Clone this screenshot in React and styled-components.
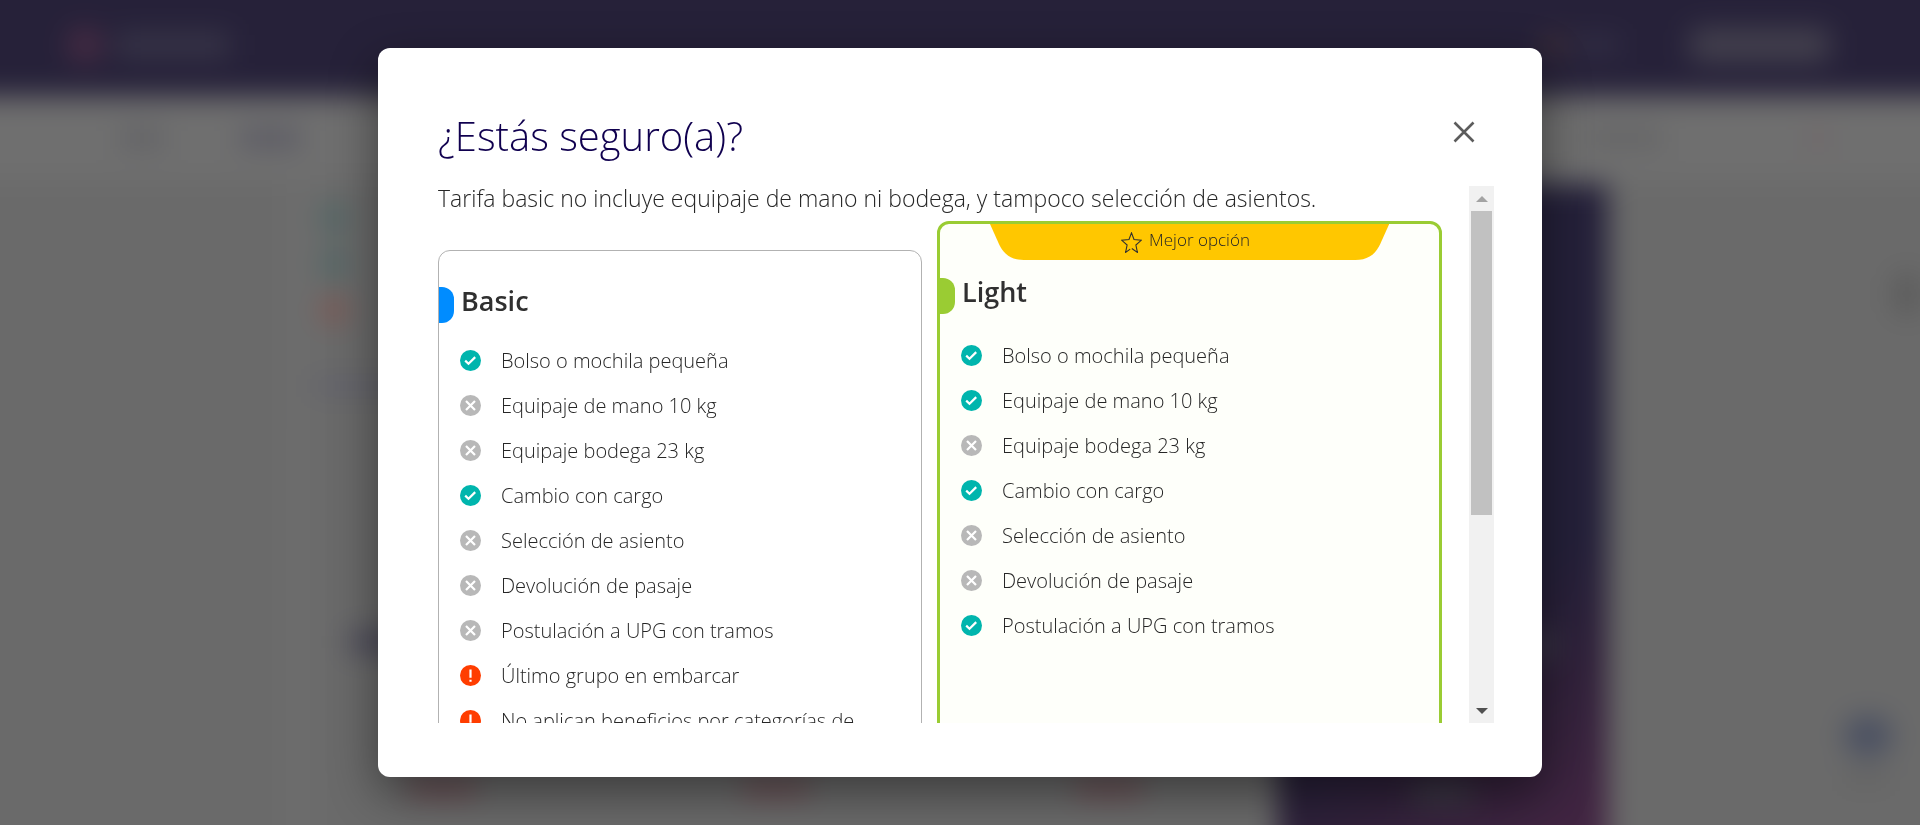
import React, { useRef } from "react";
import styled, { createGlobalStyle } from "styled-components";

const GlobalStyle = createGlobalStyle`
  *, *::before, *::after { box-sizing: border-box; }
  body {
    margin: 0;
    background: #6a6a6a;
    color: #262626;
    font-family: "Open Sans", "Noto Sans", sans-serif;
    font-weight: 300;
    overflow: hidden;
  }
`;

/* Page behind the dialog */

const Backdrop = styled.div`
  display: flex;
  flex-direction: column;
  overflow: hidden;
  filter: blur(14px);
  /* extends past the window so that the blur does not fade at its edges */
  margin: -40px;
  height: calc(100vh + 80px);
`;

const TopBar = styled.div`
  display: flex;
  align-items: center;
  flex: none;
  height: 136px;
  padding: 40px 130px 6px 108px;
  background: #262139;
`;

const SubBar = styled.div`
  display: flex;
  align-items: center;
  flex: none;
  height: 84px;
  padding: 0 120px 0 160px;
  background: #6f6f6f;
`;

const Spacer = styled.div`
  flex: 1;
`;

const Blob = styled.div`
  flex: none;
  width: ${(p) => p.$w}px;
  height: ${(p) => p.$h}px;
  margin: ${(p) => p.$m || "0"};
  border-radius: ${(p) => p.$r || 0}px;
  background: ${(p) => p.$c};
`;

const PageBody = styled.div`
  display: flex;
  flex: 1;
  padding-left: 326px;
  background: #6a6a6a;
`;

const MainColumn = styled.div`
  flex: 1;
  display: flex;
  flex-direction: column;
  padding: 16px 0 0 18px;
  background: linear-gradient(90deg, #6e6e6e, #6a6a6a 40px);
`;

const FareRow = styled.div`
  display: flex;
  justify-content: space-between;
  padding: 0 136px 0 106px;
`;

const Summary = styled.div`
  flex: none;
  width: 330px;
  display: flex;
  flex-direction: column;
  align-items: center;
  margin-top: 4px;
  background: linear-gradient(146deg, #242039 62%, #30213a 76%, #422542 94%);
`;

const SideColumn = styled.div`
  flex: none;
  width: 352px;
  display: flex;
  flex-direction: column;
  align-items: flex-end;
  padding: 92px 40px 0 0;
`;

/* Dialog */

const Overlay = styled.div`
  position: fixed;
  inset: 0;
  display: flex;
  justify-content: center;
  align-items: center;
  padding: 48px;
`;

const Dialog = styled.section`
  display: flex;
  flex-direction: column;
  width: 100%;
  max-width: 1164px;
  height: 100%;
  padding: 62px 48px 54px 60px;
  border-radius: 12px;
  background: #fff;
  box-shadow: 0 16px 48px rgba(0, 0, 0, 0.45);
`;

const DialogHeader = styled.header`
  display: flex;
  justify-content: space-between;
  align-items: flex-start;
  flex: none;
  margin-bottom: 24px;
`;

const Title = styled.h1`
  margin: 0;
  color: #10004f;
  font-size: 40px;
  line-height: 52px;
  font-weight: 300;
`;

const CloseButton = styled.button`
  display: flex;
  align-items: center;
  justify-content: center;
  width: 44px;
  height: 44px;
  margin-right: 8px;
  padding: 0;
  border: 0;
  background: none;
  color: #5c5c5c;
  cursor: pointer;
`;

const DialogBody = styled.div`
  display: flex;
  flex: 1;
  min-height: 0;
`;

const ScrollArea = styled.div`
  flex: 1;
  overflow-y: auto;
  scrollbar-width: none;
  padding-right: 27px;
`;

const Description = styled.p`
  margin: 0 0 11px;
  font-size: 23px;
  line-height: 24px;
`;

const Fares = styled.div`
  display: grid;
  grid-template-columns: 484fr 505fr;
  gap: 15px;
  min-height: 825px;
`;

const BasicCard = styled.article`
  margin-top: 29px;
  padding-top: 36px;
  border: 1px solid #b2b2b2;
  border-radius: 12px;
`;

const LightCard = styled.article`
  border: 3px solid #9acc33;
  border-radius: 12px;
  background: #fefffa;
`;

const Ribbon = styled.div`
  position: relative;
  display: flex;
  align-items: center;
  justify-content: center;
  gap: 7px;
  width: 80%;
  height: 36px;
  margin: 0 auto 18px;
  padding-right: 8px;
  font-size: 17px;
  line-height: 32px;
`;

const RibbonShape = styled.svg`
  position: absolute;
  inset: 0;
  width: 100%;
  height: 100%;
`;

const RibbonText = styled.span`
  position: relative;
  height: 36px;
`;

const StarIcon = styled.svg`
  position: relative;
  width: 21px;
  height: 21px;
`;

const FareHeader = styled.div`
  display: flex;
  align-items: flex-start;
  gap: 7px;
  margin-bottom: ${(p) => p.$gap}px;
`;

const FareTag = styled.span`
  width: 15px;
  height: 36px;
  border-radius: 0 12px 12px 0;
  background: ${(p) => p.$color};
`;

const FareName = styled.h2`
  margin: 0;
  color: #303030;
  font-size: 27px;
  line-height: 28px;
  font-weight: 600;
`;

const FeatureList = styled.ul`
  margin: 0;
  padding: 0 20px 0 21px;
  list-style: none;
`;

const Feature = styled.li`
  display: flex;
  align-items: center;
  gap: 20px;
  height: 45px;
  font-size: 20px;
  line-height: 24px;

  svg {
    flex: none;
  }
`;

const Scrollbar = styled.div`
  display: flex;
  flex-direction: column;
  flex: none;
  width: 25px;
  background: #f1f1f1;
`;

const ScrollButton = styled.button`
  display: flex;
  align-items: center;
  justify-content: center;
  flex: none;
  height: 25px;
  padding: 0;
  border: 0;
  background: none;
  color: ${(p) => p.$color};
`;

const ScrollTrack = styled.div`
  flex: 1;
  padding: 0 2px;
`;

const ScrollThumb = styled.div`
  height: 62.4%;
  background: #c1c1c1;
`;

const STATUS = {
  yes: {
    color: "#00b5ad",
    mark: <path d="M5.2 10.6 8.5 13.7 15.2 7.1" />,
  },
  no: {
    color: "#b8b8b8",
    mark: <path d="M6 6 15 15M15 6 6 15" />,
  },
  warn: {
    color: "#ff3d00",
    mark: <path d="M10.5 4.5V12.8M10.5 14.8V16.8" />,
  },
};

function StatusIcon({ status }) {
  const { color, mark } = STATUS[status];
  return (
    <svg width="21" height="21" viewBox="0 0 21 21" aria-hidden="true">
      <circle cx="10.5" cy="10.5" r="10.5" fill={color} />
      <g fill="none" stroke="#fff" strokeWidth="2.2">
        {mark}
      </g>
    </svg>
  );
}

const BASIC = [
  ["yes", "Bolso o mochila pequeña"],
  ["no", "Equipaje de mano 10 kg"],
  ["no", "Equipaje bodega 23 kg"],
  ["yes", "Cambio con cargo"],
  ["no", "Selección de asiento"],
  ["no", "Devolución de pasaje"],
  ["no", "Postulación a UPG con tramos"],
  ["warn", "Último grupo en embarcar"],
  ["warn", "No aplican beneficios por categorías de"],
];

const LIGHT = [
  ["yes", "Bolso o mochila pequeña"],
  ["yes", "Equipaje de mano 10 kg"],
  ["no", "Equipaje bodega 23 kg"],
  ["yes", "Cambio con cargo"],
  ["no", "Selección de asiento"],
  ["no", "Devolución de pasaje"],
  ["yes", "Postulación a UPG con tramos"],
];

function Features({ items }) {
  return (
    <FeatureList>
      {items.map(([status, text]) => (
        <Feature key={text}>
          <StatusIcon status={status} />
          <span>{text}</span>
        </Feature>
      ))}
    </FeatureList>
  );
}

function Page() {
  return (
    <Backdrop aria-hidden="true">
      <TopBar>
        <Blob $w={34} $h={34} $r={17} $c="#4a2c44" />
        <Blob $w={114} $h={24} $m="0 0 0 14px" $c="#383548" />
        <Spacer />
        <Blob $w={24} $h={24} $r={12} $c="#402f36" />
        <Blob $w={46} $h={16} $m="0 70px 0 8px" $c="#343046" />
        <Blob $w={140} $h={34} $r={8} $c="#43404d" />
      </TopBar>
      <SubBar>
        <Blob $w={44} $h={18} $c="#606064" />
        <Blob $w={60} $h={18} $m="0 0 0 76px" $c="#595863" />
        <Spacer />
        <Blob $w={76} $h={14} $m="0 146px 0 0" $c="#606062" />
        <Blob $w={20} $h={16} $m="0 12px 0 0" $c="#726468" />
      </SubBar>
      <PageBody>
        <MainColumn>
          <Blob $w={28} $h={28} $r={14} $c="#506866" $m="8px 0 18px 16px" />
          <Blob $w={28} $h={28} $r={14} $c="#506866" $m="0 0 18px 16px" />
          <Blob $w={28} $h={28} $r={14} $c="#7d5853" $m="0 0 56px 16px" />
          <Blob $w={120} $h={12} $c="#5f5f6c" $m="0 0 240px 8px" />
          <Blob $w={90} $h={20} $c="#484658" $m="0 0 126px 46px" />
          <FareRow>
            <Blob $w={66} $h={18} $c="#6d4d53" />
            <Blob $w={66} $h={18} $c="#6d4d53" />
            <Blob $w={66} $h={18} $c="#6d4d53" />
          </FareRow>
        </MainColumn>
        <Summary>
          <Blob $w={36} $h={26} $c="#383644" $m="448px 0 122px 190px" />
          <Blob $w={60} $h={24} $c="#3b3944" />
        </Summary>
        <SideColumn>
          <Blob $w={26} $h={44} $r={14} $c="#5a5a5a" $m="0 0 400px 0" />
          <Blob $w={48} $h={40} $r={20} $c="#4a5062" $m="0 28px 14px 0" />
          <Blob $w={44} $h={14} $c="#626262" $m="0 32px 0 0" />
        </SideColumn>
      </PageBody>
    </Backdrop>
  );
}

export default function App() {
  const area = useRef(null);
  const scroll = (top) => area.current.scrollBy({ top });

  return (
    <>
      <GlobalStyle />
      <Page />
      <Overlay>
        <Dialog role="dialog" aria-modal="true" aria-labelledby="dialog-title">
          <DialogHeader>
            <Title id="dialog-title">¿Estás seguro(a)?</Title>
            <CloseButton type="button" aria-label="Cerrar">
              <svg width="22" height="22" viewBox="0 0 22 22" aria-hidden="true">
                <path d="M1.5 1.5 20.5 20.5M20.5 1.5 1.5 20.5" fill="none" stroke="currentColor" strokeWidth="2.6" />
              </svg>
            </CloseButton>
          </DialogHeader>
          <DialogBody>
            <ScrollArea ref={area}>
              <Description>
                Tarifa basic no incluye equipaje de mano ni bodega, y tampoco selección de asientos.
              </Description>
              <Fares>
                <BasicCard>
                  <FareHeader $gap={15}>
                    <FareTag $color="#008cff" />
                    <FareName>Basic</FareName>
                  </FareHeader>
                  <Features items={BASIC} />
                </BasicCard>
                <LightCard>
                  <Ribbon>
                    <RibbonShape viewBox="0 0 401 36" preserveAspectRatio="none" aria-hidden="true">
                      <path d="M0 0 9 20C14 31 22 36 34 36H367C379 36 387 31 392 20L401 0Z" fill="#ffc700" />
                    </RibbonShape>
                    <StarIcon viewBox="0 0 21 21" aria-hidden="true">
                      <path
                        d="M9.2 17.1 4.6 20.4 6.1 13 .8 8.3 8 7.5 10.5.9 13 7.5 20.2 8.3 14.9 13 16.4 20.4 10.8 16.5"
                        fill="none"
                        stroke="#303030"
                        strokeWidth="1.1"
                      />
                    </StarIcon>
                    <RibbonText>Mejor opción</RibbonText>
                  </Ribbon>
                  <FareHeader $gap={19}>
                    <FareTag $color="#9acc33" />
                    <FareName>Light</FareName>
                  </FareHeader>
                  <Features items={LIGHT} />
                </LightCard>
              </Fares>
            </ScrollArea>
            <Scrollbar>
              <ScrollButton type="button" aria-label="Subir" $color="#a3a3a3" onClick={() => scroll(-45)}>
                <svg width="12" height="6" viewBox="0 0 12 6" aria-hidden="true">
                  <path d="M6 0 12 6H0Z" fill="currentColor" />
                </svg>
              </ScrollButton>
              <ScrollTrack>
                <ScrollThumb />
              </ScrollTrack>
              <ScrollButton type="button" aria-label="Bajar" $color="#505050" onClick={() => scroll(45)}>
                <svg width="12" height="6" viewBox="0 0 12 6" aria-hidden="true">
                  <path d="M0 0H12L6 6Z" fill="currentColor" />
                </svg>
              </ScrollButton>
            </Scrollbar>
          </DialogBody>
        </Dialog>
      </Overlay>
    </>
  );
}
